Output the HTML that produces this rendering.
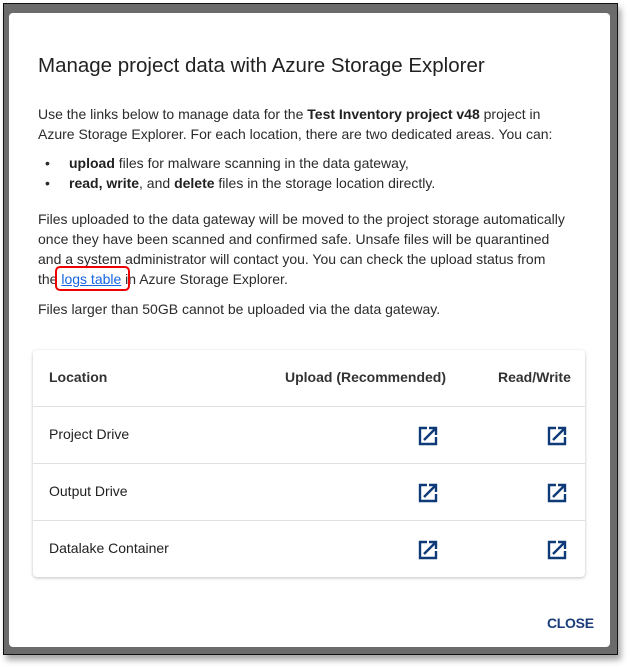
<!DOCTYPE html>
<html><head><meta charset="utf-8"><style>
*{box-sizing:border-box;margin:0;padding:0}
body{width:630px;height:667px;background:#fff;font-family:"Liberation Sans",Arial,sans-serif;position:relative;overflow:hidden;color:#212121}
.frame{position:absolute;left:3px;top:3px;width:615px;height:652px;border:1px solid #111;background:#6b6b6b;box-shadow:3px 5px 6px rgba(0,0,0,.35)}
.dlg{position:absolute;left:9px;top:13px;width:601px;height:634px;background:#fff;border-radius:4px}
h1{position:absolute;left:29px;top:41px;font-size:20.5px;font-weight:normal;color:#212121}
.t{position:absolute;left:29px;font-size:14px;line-height:20px;color:#2b2b2b}
b{font-weight:bold;color:#212121}
a{color:#1565e0;text-decoration:underline}
.box{position:absolute;left:46px;top:253px;width:75px;height:25px;border:2.5px solid #e00;border-radius:5px}
.card{position:absolute;left:24px;top:337px;width:552px;height:227px;border-radius:4px;box-shadow:0 1px 3px rgba(0,0,0,.25)}
.row{position:absolute;left:0;width:552px;height:57px;border-bottom:1px solid #e0e0e0;font-size:14px}
.row span{position:absolute;top:19px}
.h span{font-weight:bold;color:#333}
svg{position:absolute;top:19px}
.close{position:absolute;left:538px;top:602px;font-size:14px;font-weight:bold;color:#1a3c7a;letter-spacing:-0.3px}
.bl{position:absolute;left:36px}
</style></head><body>
<div class="frame"></div>
<div class="dlg">
<h1>Manage project data with Azure Storage Explorer</h1>
<div class="t" style="top:91px">Use the links below to manage data for the <b>Test Inventory project v48</b> project in<br>Azure Storage Explorer. For each location, there are two dedicated areas. You can:</div>
<div class="t" style="top:140px;left:36px">•<br>•</div>
<div class="t" style="top:140px;left:60px"><b>upload</b> files for malware scanning in the data gateway,<br><b>read, write</b>, and <b>delete</b> files in the storage location directly.</div>
<div class="t" style="top:196px">Files uploaded to the data gateway will be moved to the project storage automatically<br>once they have been scanned and confirmed safe. Unsafe files will be quarantined<br>and a system administrator will contact you. You can check the upload status from<br>the <a>logs table</a> in Azure Storage Explorer.</div>
<div class="box"></div>
<div class="t" style="top:286px">Files larger than 50GB cannot be uploaded via the data gateway.</div>
<div class="card">
<div class="row h" style="top:0"><span style="left:16px">Location</span><span style="left:252px">Upload (Recommended)</span><span style="left:465px">Read/Write</span></div>
<div class="row" style="top:57px"><span style="left:16px">Project Drive</span>
<svg style="left:385px" width="20" height="20" viewBox="0 0 20 20"><path d="M9 2H2v16h16v-7" fill="none" stroke="#0f3a78" stroke-width="2.4"/><path d="M6 14L17 3M11 2h7v7" fill="none" stroke="#0f3a78" stroke-width="2.4"/></svg>
<svg style="left:514px" width="20" height="20" viewBox="0 0 20 20"><path d="M9 2H2v16h16v-7" fill="none" stroke="#0f3a78" stroke-width="2.4"/><path d="M6 14L17 3M11 2h7v7" fill="none" stroke="#0f3a78" stroke-width="2.4"/></svg></div>
<div class="row" style="top:114px"><span style="left:16px">Output Drive</span>
<svg style="left:385px" width="20" height="20" viewBox="0 0 20 20"><path d="M9 2H2v16h16v-7" fill="none" stroke="#0f3a78" stroke-width="2.4"/><path d="M6 14L17 3M11 2h7v7" fill="none" stroke="#0f3a78" stroke-width="2.4"/></svg>
<svg style="left:514px" width="20" height="20" viewBox="0 0 20 20"><path d="M9 2H2v16h16v-7" fill="none" stroke="#0f3a78" stroke-width="2.4"/><path d="M6 14L17 3M11 2h7v7" fill="none" stroke="#0f3a78" stroke-width="2.4"/></svg></div>
<div class="row" style="top:171px;border-bottom:none"><span style="left:16px">Datalake Container</span>
<svg style="left:385px" width="20" height="20" viewBox="0 0 20 20"><path d="M9 2H2v16h16v-7" fill="none" stroke="#0f3a78" stroke-width="2.4"/><path d="M6 14L17 3M11 2h7v7" fill="none" stroke="#0f3a78" stroke-width="2.4"/></svg>
<svg style="left:514px" width="20" height="20" viewBox="0 0 20 20"><path d="M9 2H2v16h16v-7" fill="none" stroke="#0f3a78" stroke-width="2.4"/><path d="M6 14L17 3M11 2h7v7" fill="none" stroke="#0f3a78" stroke-width="2.4"/></svg></div>
</div>
<div class="close">CLOSE</div>
</div>
</body></html>
